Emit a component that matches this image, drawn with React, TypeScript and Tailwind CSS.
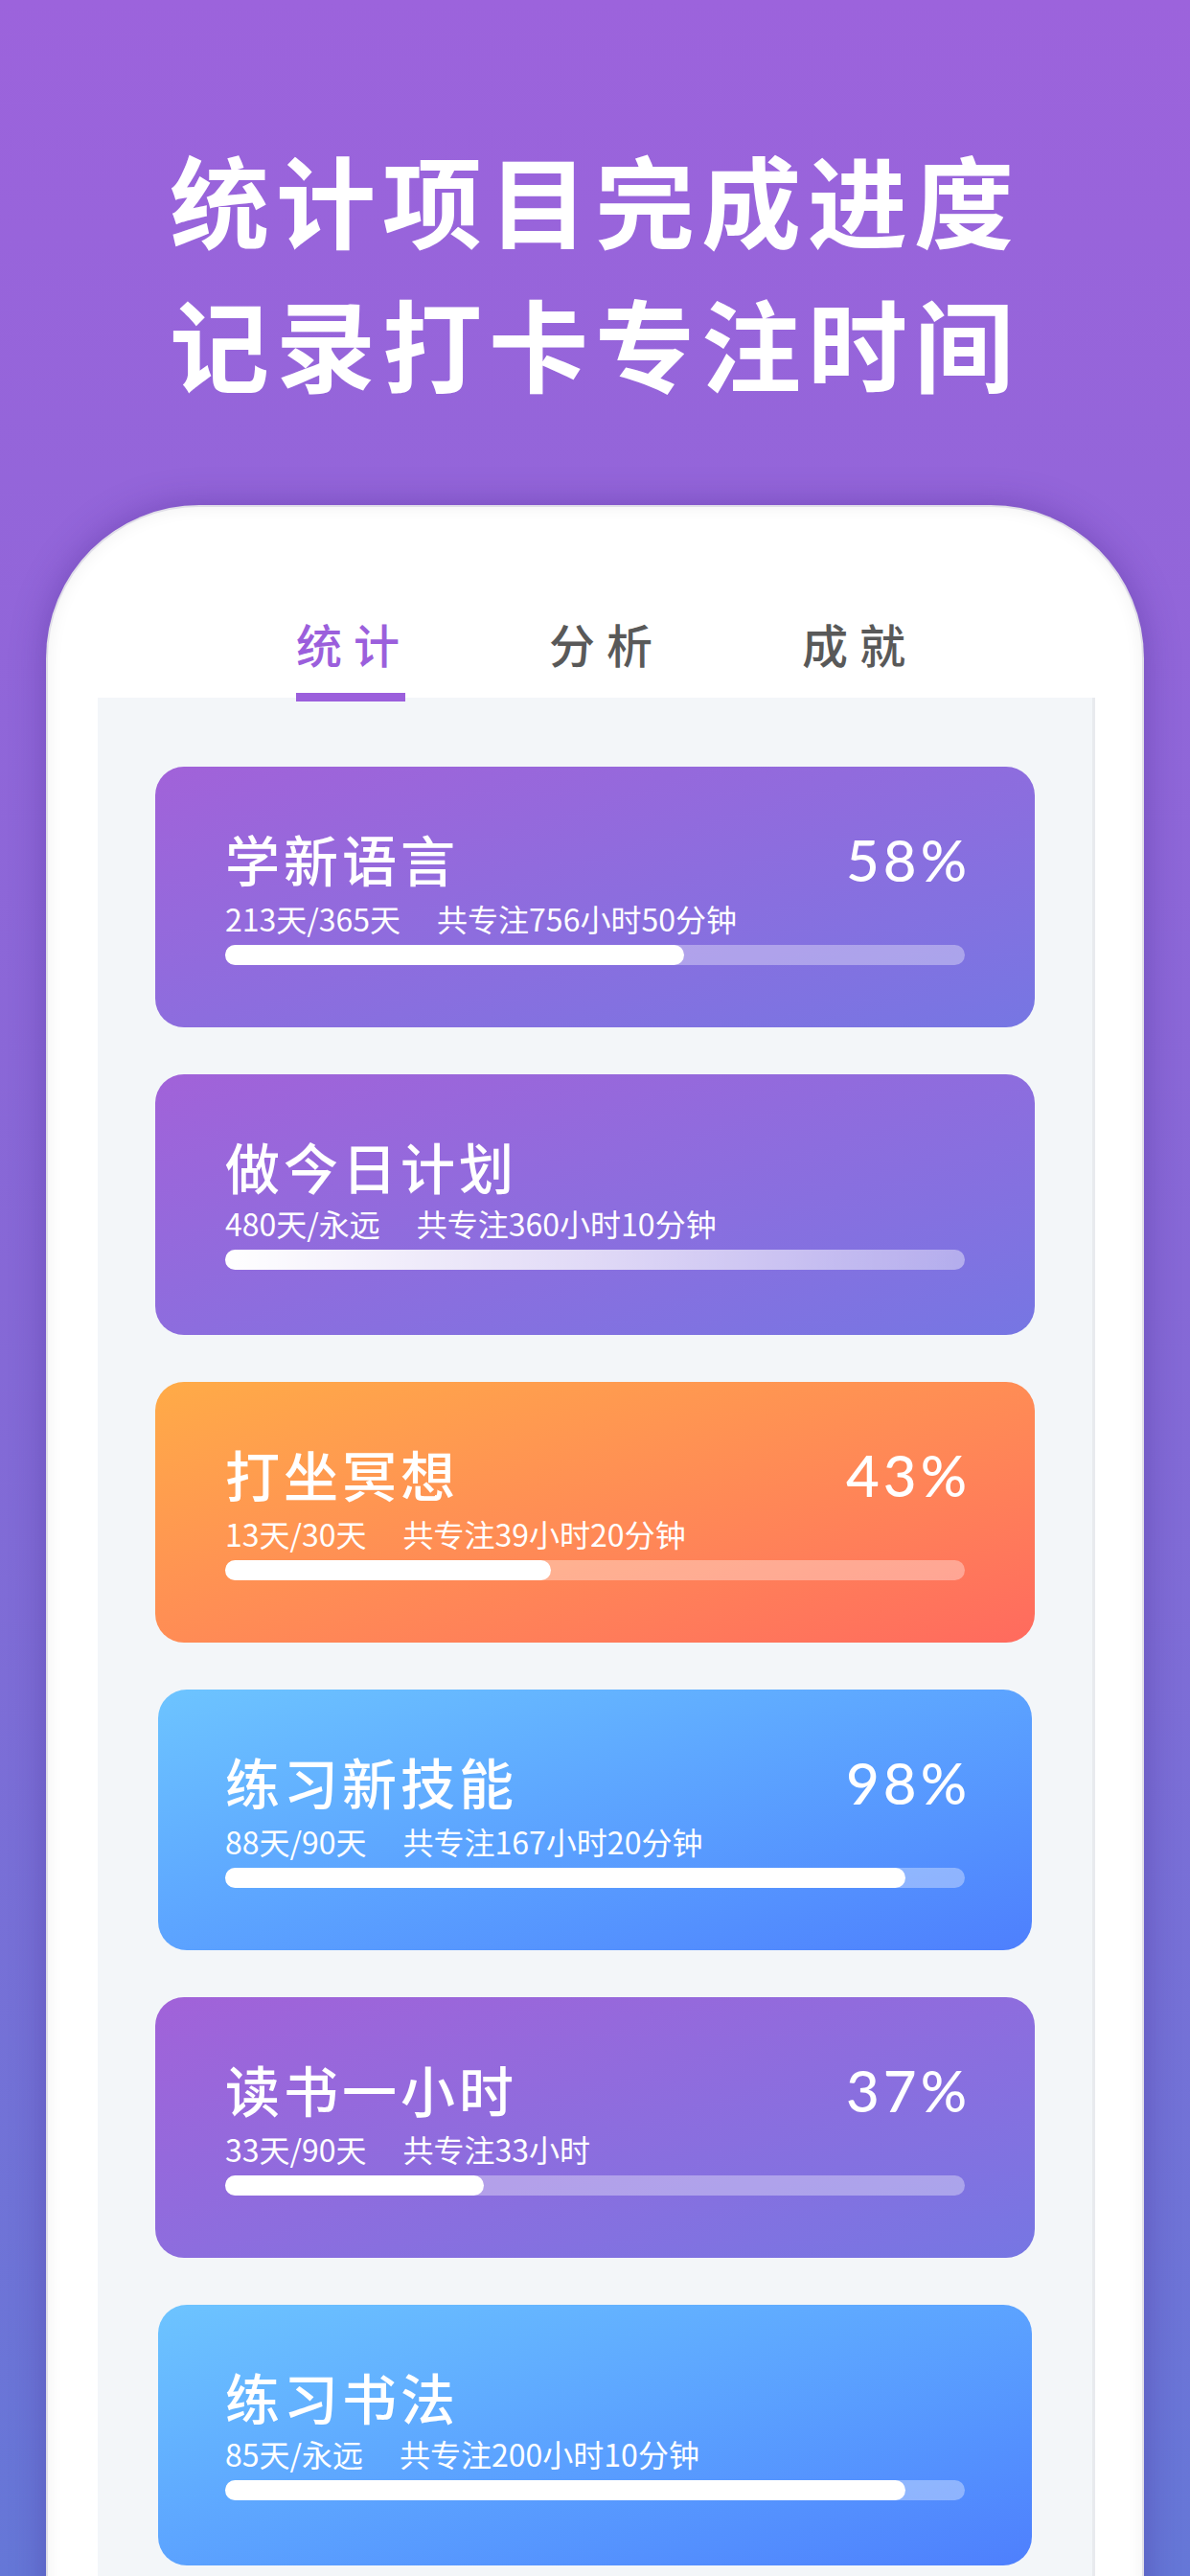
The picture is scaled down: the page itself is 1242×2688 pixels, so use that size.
const tasks = [
  { title: "学新语言", pct: "58%", days: "213天/365天", focus: "共专注756小时50分钟", fill: 62, tone: "purple" },
  { title: "做今日计划", pct: "", days: "480天/永远", focus: "共专注360小时10分钟", fill: 100, tone: "purple" },
  { title: "打坐冥想", pct: "43%", days: "13天/30天", focus: "共专注39小时20分钟", fill: 44, tone: "orange" },
  { title: "练习新技能", pct: "98%", days: "88天/90天", focus: "共专注167小时20分钟", fill: 92, tone: "blue" },
  { title: "读书一小时", pct: "37%", days: "33天/90天", focus: "共专注33小时", fill: 35, tone: "purple" },
  { title: "练习书法", pct: "", days: "85天/永远", focus: "共专注200小时10分钟", fill: 92, tone: "blue" },
];

const toneClass: Record<string, string> = {
  purple: "mx-[60px] bg-linear-to-br from-[#a162d9] to-[#7676e3]",
  orange: "mx-[60px] bg-linear-to-br from-[#ffab47] to-[#ff6a5e]",
  blue: "mx-[63px] bg-linear-to-br from-[#6dc4ff] to-[#4e7ffd]",
};

type Task = (typeof tasks)[number];

function TaskCard({ task }: { task: Task }) {
  const openEnded = task.pct === "";
  return (
    <div className={`h-[272px] rounded-[30px] text-white ${toneClass[task.tone]}`}>
      <div className="mx-auto w-[772px] pt-[67px]">
        <div className="flex items-baseline justify-between">
          <span className="text-[57px] leading-none font-medium tracking-[4px]">{task.title}</span>
          {!openEnded && (
            <span className="mr-[-6px] font-['Lato',sans-serif] text-[60px] leading-none font-medium tracking-[4px]">
              {task.pct}
            </span>
          )}
        </div>
        <div className="mt-[15px] flex gap-[38px] text-[32px] leading-none">
          <span>{task.days}</span>
          <span>{task.focus}</span>
        </div>
        <div className="mt-[12px] h-[21px] rounded-full bg-white/35">
          {openEnded && task.tone === "purple" ? (
            <div className="h-full w-full rounded-full bg-linear-to-r from-white via-white/60 to-white/10" />
          ) : (
            <div className="h-full rounded-full bg-white" style={{ width: `${task.fill}%` }} />
          )}
        </div>
      </div>
    </div>
  );
}

const tabs = ["统计", "分析", "成就"];

export default function App() {
  return (
    <div className="h-[2688px] w-[1242px] overflow-hidden bg-linear-to-b from-[#9c63dc] via-[#8668d6] to-[#6577d7] font-['Noto_Sans_CJK_SC','Noto_Sans_CJK_JP',sans-serif]">
      <h1 className="pt-[132px] text-center text-[104px] leading-[150px] font-bold tracking-[7px] text-white">
        统计项目完成进度
        <br />
        记录打卡专注时间
      </h1>

      {/* phone mockup */}
      <div className="mx-[48px] mt-[95px] h-[2200px] rounded-t-[160px] border-2 border-b-0 border-[#e0dee8] bg-white shadow-[0_0_36px_rgba(60,30,130,0.35),inset_0_0_18px_rgba(0,0,0,0.06)]">
        <div className="relative z-10 -mb-[4px] flex justify-center gap-[144px] pt-[118px] pl-[24px]">
          {tabs.map((t, i) => (
            <div key={t} className="flex flex-col items-start">
              <span
                className={`text-[48px] leading-none font-medium tracking-[12px] ${
                  i === 0 ? "text-[#9b5fdc]" : "text-[#595959]"
                }`}
              >
                {t}
              </span>
              <div className={`mt-[28px] h-[9px] w-[114px] ${i === 0 ? "bg-[#9b5fdc]" : "bg-transparent"}`} />
            </div>
          ))}
        </div>

        <div className="ml-[52px] mr-[49px] flex h-[2000px] flex-col gap-[49px] border-r-[3px] border-[#e8eaee] bg-[#f3f6f9] pt-[72px]">
          {tasks.map((task) => (
            <TaskCard key={task.title} task={task} />
          ))}
        </div>
      </div>
    </div>
  );
}
